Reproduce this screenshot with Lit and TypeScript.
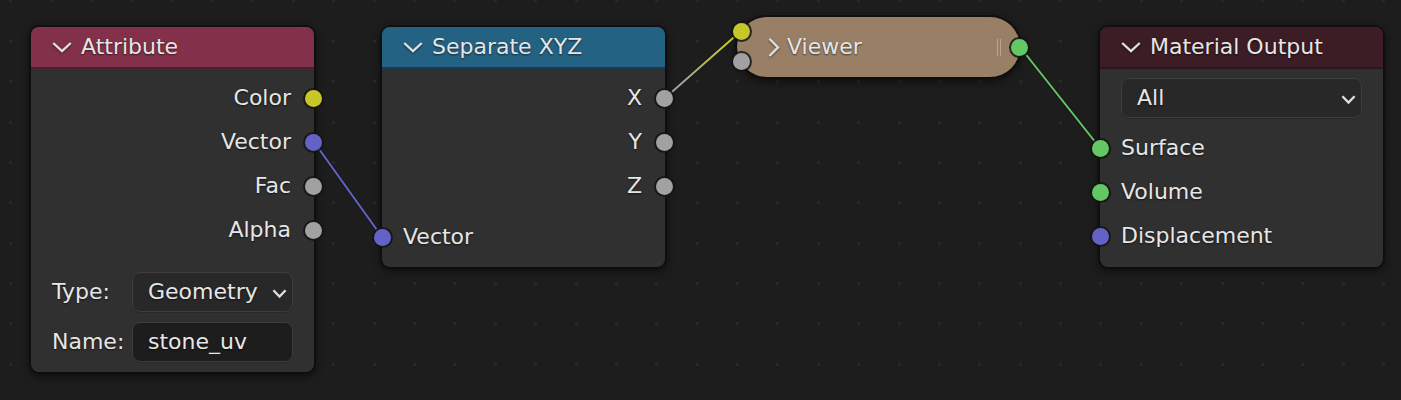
import { LitElement, html, svg, css, nothing } from "lit";
import { customElement, property } from "lit/decorators.js";
import { styleMap } from "lit/directives/style-map.js";

type SocketKind = "color" | "vector" | "value" | "shader";

interface Point {
  x: number;
  y: number;
}

interface Link {
  id: string;
  from: Point;
  to: Point;
  fromKind: SocketKind;
  toKind: SocketKind;
}

const SOCKET_COLORS: Record<SocketKind, string> = {
  color: "#c7c729",
  vector: "#6363c7",
  value: "#a1a1a1",
  shader: "#63c763",
};

const LINKS: Link[] = [
  { id: "uv", from: { x: 314, y: 142 }, to: { x: 382, y: 237 }, fromKind: "vector", toKind: "vector" },
  { id: "x", from: { x: 665, y: 98 }, to: { x: 741, y: 31 }, fromKind: "value", toKind: "color" },
  { id: "surface", from: { x: 1020, y: 47 }, to: { x: 1100, y: 148 }, fromKind: "shader", toKind: "shader" },
];

/** A coloured connection point on the edge of a node. */
@customElement("node-socket")
class NodeSocket extends LitElement {
  @property() kind: SocketKind = "value";

  static styles = css`
    :host {
      display: block;
      width: 17px;
      height: 17px;
    }
    .dot {
      width: 17px;
      height: 17px;
      border-radius: 50%;
      box-shadow: 0 0 0 2px rgba(20, 20, 20, 0.85);
    }
    .color { background: #c7c729; }
    .vector { background: #6363c7; }
    .value { background: #a1a1a1; }
    .shader { background: #63c763; }
  `;

  render() {
    return html`<div class="dot ${this.kind}"></div>`;
  }
}

/** One input or output line: a name with its socket on the node's edge. */
@customElement("socket-row")
class SocketRow extends LitElement {
  @property() name = "";
  @property() kind: SocketKind = "value";
  @property() side: "in" | "out" = "out";

  static styles = css`
    :host {
      display: block;
    }
    .row {
      position: relative;
      display: flex;
      align-items: center;
      height: 44px;
      padding: 0 23px 0 21px;
    }
    .out {
      justify-content: flex-end;
    }
    .socket {
      position: absolute;
      z-index: 2;
      top: 14px;
    }
    .out .socket { right: -8px; }
    .in .socket { left: -8px; }
  `;

  render() {
    return html`
      <div class="row ${this.side}">
        <span>${this.name}</span>
        <node-socket class="socket" kind=${this.kind}></node-socket>
      </div>
    `;
  }
}

/** An expanded node with a coloured, collapsible title bar. */
@customElement("shader-node")
class ShaderNode extends LitElement {
  @property() heading = "";
  @property() category: "attribute" | "converter" | "output" = "attribute";

  static styles = css`
    :host {
      display: block;
      width: 283px;
    }
    .node {
      background: #303030;
      border-radius: 8px;
      box-shadow: 0 0 0 2px rgba(14, 14, 14, 0.75), 0 3px 10px 1px rgba(0, 0, 0, 0.6);
    }
    .header {
      display: flex;
      align-items: center;
      gap: 9px;
      height: 40px;
      padding: 0 21px;
      border-radius: 8px 8px 0 0;
      border-bottom: 2px solid;
    }
    .attribute { background: #83314a; border-color: #4b1f2d; }
    .converter { background: #246283; border-color: #1b3b4c; }
    .output { background: #3c1d26; border-color: #28171c; }
    .title {
      margin: 0;
      font: inherit;
    }
    .toggle {
      display: flex;
      padding: 0;
      border: 0;
      background: none;
      color: inherit;
    }
    .toggle svg {
      display: block;
      filter: drop-shadow(0 1px 1px rgba(0, 0, 0, 0.5));
    }
  `;

  render() {
    return html`
      <section class="node">
        <header class="header ${this.category}">
          <button class="toggle" aria-label="Collapse ${this.heading}" aria-expanded="true">
            <svg width="20" height="12" viewBox="0 0 20 12" fill="none" stroke="#e0e0e0" stroke-width="2.3">
              <path d="M1.2 2 L10 10.2 L18.8 2" />
            </svg>
          </button>
          <h2 class="title">${this.heading}</h2>
        </header>
        <slot></slot>
      </section>
    `;
  }
}

/** A node folded down to a single rounded pill. */
@customElement("collapsed-node")
class CollapsedNode extends LitElement {
  @property() heading = "";

  static styles = css`
    :host {
      display: block;
      width: 283px;
    }
    .node {
      position: relative;
      display: flex;
      align-items: center;
      height: 60px;
      padding: 0 19px 0 31px;
      box-sizing: border-box;
      border-radius: 30px;
      background: #997f66;
      box-shadow: 0 0 0 2px rgba(14, 14, 14, 0.75), 0 3px 10px 1px rgba(0, 0, 0, 0.6);
    }
    .toggle {
      display: flex;
      padding: 0;
      border: 0;
      background: none;
      color: inherit;
    }
    .toggle svg {
      display: block;
      filter: drop-shadow(0 1px 1px rgba(0, 0, 0, 0.5));
    }
    .title {
      flex: 1;
      margin: 0 0 0 7px;
      font: inherit;
    }
    .grip {
      width: 2px;
      height: 17px;
      border: solid rgba(200, 190, 180, 0.6);
      border-width: 0 1px;
    }
    .inputs {
      position: absolute;
      z-index: 2;
      left: -4px;
      top: 6px;
      display: grid;
      gap: 13px;
    }
    .outputs {
      position: absolute;
      z-index: 2;
      right: -8px;
      top: 22px;
    }
  `;

  render() {
    return html`
      <section class="node">
        <button class="toggle" aria-label="Expand ${this.heading}" aria-expanded="false">
          <svg width="12" height="20" viewBox="0 0 12 20" fill="none" stroke="#e0e0e0" stroke-width="2.3">
            <path d="M1.4 1.8 L10 10.4 L1.4 19" />
          </svg>
        </button>
        <h2 class="title">${this.heading}</h2>
        <span class="grip"></span>
        <div class="inputs"><slot name="inputs"></slot></div>
        <div class="outputs"><slot name="outputs"></slot></div>
      </section>
    `;
  }
}

/** A drop-down or text box in a node, with an optional visible label. */
@customElement("node-field")
class NodeField extends LitElement {
  @property() label = "";
  @property() hint = "";
  @property() value = "";
  @property() type: "select" | "text" = "select";
  @property({ attribute: false }) options: string[] = [];

  static styles = css`
    :host {
      display: block;
    }
    .field {
      display: grid;
      grid-template-columns: 1fr;
      align-items: center;
      height: 40px;
      padding: 0 21px;
    }
    .labelled {
      grid-template-columns: 80px 1fr;
    }
    .box {
      position: relative;
      display: flex;
      min-width: 0;
    }
    .control {
      flex: 1;
      min-width: 0;
      width: 100%;
      height: 40px;
      box-sizing: border-box;
      margin: 0;
      padding: 0 15px;
      border: 1px solid #3d3d3d;
      border-radius: 8px;
      outline: 0;
      appearance: none;
      font: inherit;
      color: inherit;
      text-shadow: inherit;
      box-shadow: 0 1px 1px rgba(0, 0, 0, 0.15);
    }
    .select { background: #282828; }
    .text {
      padding-bottom: 2px;
      background: #1d1d1d;
    }
    .arrow {
      position: absolute;
      right: 6px;
      top: 16px;
      pointer-events: none;
    }
  `;

  render() {
    const control =
      this.type === "select"
        ? html`
            <select id="control" class="control select" aria-label=${this.hint || nothing}>
              ${this.options.map((o) => html`<option ?selected=${o === this.value}>${o}</option>`)}
            </select>
            <svg class="arrow" width="15" height="11" viewBox="0 0 15 11" fill="none" stroke="#e0e0e0" stroke-width="2.3">
              <path d="M1.4 2.2 L7.5 8.6 L13.6 2.2" />
            </svg>
          `
        : html`<input id="control" class="control text" type="text" .value=${this.value} />`;
    return html`
      <div class="field ${this.label ? "labelled" : ""}">
        ${this.label ? html`<label for="control">${this.label}</label>` : nothing}
        <div class="box">${control}</div>
      </div>
    `;
  }
}

@customElement("app-root")
class AppRoot extends LitElement {
  static styles = css`
    :host {
      display: block;
      color: #e6e6e6;
      font: 22px/26px "DejaVu Sans", Verdana, sans-serif;
      text-shadow: 0 1px 2px rgba(0, 0, 0, 0.6);
    }
    .canvas {
      position: relative;
      min-height: 100vh;
      overflow: hidden;
      background: #1d1d1d;
    }
    .grid,
    .links {
      position: absolute;
      left: 0;
      top: 0;
      width: 100%;
      height: 100%;
      pointer-events: none;
    }
    .links {
      z-index: 1;
    }
    .node {
      position: absolute;
    }
    .attribute-body { padding: 7px 0 10px; }
    .fields {
      display: grid;
      gap: 10px;
      margin-top: 20px;
    }
    .separate-body { padding: 7px 0 8px; }
    .inputs { margin-top: 7px; }
    .output-body { padding: 9px 0; }
    .output-inputs { margin-top: 8px; }
  `;

  private at(x: number, y: number) {
    return styleMap({ left: `${x}px`, top: `${y}px` });
  }

  // The grid step is not a whole number of pixels, so each dot snaps to one.
  private renderGrid() {
    const step = 40.38;
    const dots = [];
    for (let row = 0; row < 28; row++) {
      for (let col = 0; col < 64; col++) {
        dots.push(svg`<rect x=${Math.round(9.2 + col * step)} y=${Math.round(-0.6 + row * step)} width="3" height="3" />`);
      }
    }
    return svg`<g fill="#282828">${dots}</g>`;
  }

  private renderLink(link: Link) {
    const { id, from, to } = link;
    return svg`
      <linearGradient id=${id} gradientUnits="userSpaceOnUse" x1=${from.x} y1=${from.y} x2=${to.x} y2=${to.y}>
        <stop offset="0.2" stop-color=${SOCKET_COLORS[link.fromKind]} />
        <stop offset="0.8" stop-color=${SOCKET_COLORS[link.toKind]} />
      </linearGradient>
      <line x1=${from.x} y1=${from.y} x2=${to.x} y2=${to.y} stroke="#141414" stroke-opacity="0.5" stroke-width="4" />
      <line x1=${from.x} y1=${from.y} x2=${to.x} y2=${to.y} stroke="url(#${id})" stroke-width="2" />
    `;
  }

  render() {
    return html`
      <main class="canvas">
        <svg class="grid">${this.renderGrid()}</svg>

        <shader-node class="node" style=${this.at(31, 27)} heading="Attribute" category="attribute">
          <div class="attribute-body">
            <socket-row name="Color" kind="color"></socket-row>
            <socket-row name="Vector" kind="vector"></socket-row>
            <socket-row name="Fac" kind="value"></socket-row>
            <socket-row name="Alpha" kind="value"></socket-row>
            <div class="fields">
              <node-field label="Type:" value="Geometry" .options=${["Geometry", "Object", "Instancer"]}></node-field>
              <node-field label="Name:" type="text" value="stone_uv"></node-field>
            </div>
          </div>
        </shader-node>

        <shader-node class="node" style=${this.at(382, 27)} heading="Separate XYZ" category="converter">
          <div class="separate-body">
            <socket-row name="X" kind="value"></socket-row>
            <socket-row name="Y" kind="value"></socket-row>
            <socket-row name="Z" kind="value"></socket-row>
            <socket-row class="inputs" name="Vector" kind="vector" side="in"></socket-row>
          </div>
        </shader-node>

        <collapsed-node class="node" style=${this.at(737, 17)} heading="Viewer">
          <node-socket slot="inputs" kind="color"></node-socket>
          <node-socket slot="inputs" kind="value"></node-socket>
          <node-socket slot="outputs" kind="shader"></node-socket>
        </collapsed-node>

        <shader-node class="node" style=${this.at(1100, 27)} heading="Material Output" category="output">
          <div class="output-body">
            <node-field hint="Target" value="All" .options=${["All", "Eevee", "Cycles"]}></node-field>
            <div class="output-inputs">
              <socket-row name="Surface" kind="shader" side="in"></socket-row>
              <socket-row name="Volume" kind="shader" side="in"></socket-row>
              <socket-row name="Displacement" kind="vector" side="in"></socket-row>
            </div>
          </div>
        </shader-node>

        <svg class="links">${LINKS.map((link) => this.renderLink(link))}</svg>
      </main>
    `;
  }
}
